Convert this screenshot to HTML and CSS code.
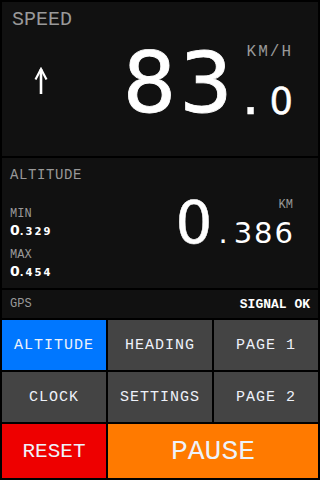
FILE: index.html
```html
<!DOCTYPE html>
<html lang="en">
<head>
    <meta charset="UTF-8">
    <title>Trip Computer</title>
    <link rel="stylesheet" href="styles.css">
</head>
<body>
    <div class="screen">
        <section class="panel speed">
            <div class="label">SPEED</div>
            <div class="speed-row">
                <svg class="heading" width="14" height="28" viewBox="0 0 14 28">
                    <path d="M7 2 V27" stroke="#fff" stroke-width="2.6" fill="none"/>
                    <path d="M1.5 12.5 L7 2 L12.5 12.5" stroke="#fff" stroke-width="2.2" fill="none" stroke-linejoin="miter"/>
                </svg>
                <div class="speed-value">
                    <span class="int">83</span>
                    <div class="side">
                        <span class="unit">KM/H</span>
                        <span class="frac"><span class="dot">.</span>0</span>
                    </div>
                </div>
            </div>
        </section>

        <section class="panel altitude">
            <div class="label small">ALTITUDE</div>
            <div class="alt-row">
                <div class="stats">
                    <div class="stat-label">MIN</div>
                    <div class="stat-value">0<span>.329</span></div>
                    <div class="stat-label">MAX</div>
                    <div class="stat-value">0<span>.454</span></div>
                </div>
                <div class="alt-value">
                    <span class="int">0</span>
                    <div class="side">
                        <span class="unit">KM</span>
                        <span class="frac"><span class="dot">.</span>386</span>
                    </div>
                </div>
            </div>
        </section>

        <section class="panel gps">
            <span class="gps-label">GPS</span>
            <span class="gps-state">SIGNAL OK</span>
        </section>

        <div class="buttons">
            <button class="btn active">ALTITUDE</button>
            <button class="btn">HEADING</button>
            <button class="btn">PAGE 1</button>
            <button class="btn">CLOCK</button>
            <button class="btn">SETTINGS</button>
            <button class="btn">PAGE 2</button>
            <button class="btn reset">RESET</button>
            <button class="btn pause">PAUSE</button>
        </div>
    </div>
</body>
</html>
```

FILE: styles.css
```css
body {
    margin: 0;
    background: #000;
    font-family: "Liberation Mono", monospace;
    color: #fff;
}
.screen {
    display: flex;
    flex-direction: column;
    gap: 2px;
    padding: 2px;
    height: 480px;
    box-sizing: border-box;
}
.panel {
    background: #111;
}
.label {
    color: #999;
    font-size: 20px;
    line-height: 1;
}
.label.small {
    font-size: 14px;
    letter-spacing: 0.6px;
}
.speed {
    height: 154px;
    padding: 8px 25px 0 10px;
    box-sizing: border-box;
}
.speed-row {
    display: flex;
    justify-content: space-between;
    align-items: flex-start;
    margin-top: 12px;
}
.heading {
    margin-left: 22px;
    margin-top: 25px;
}
.speed-value, .alt-value {
    display: flex;
    font-family: "DejaVu Sans", sans-serif;
}
.speed-value .int {
    font-size: 84px;
    line-height: 82px;
    letter-spacing: 3px;
    -webkit-text-stroke: 0.8px #fff;
}
.side {
    display: flex;
    flex-direction: column;
    justify-content: space-between;
    align-items: flex-end;
}
.unit {
    font-family: "Liberation Mono", monospace;
    color: #999;
    font-size: 16px;
    letter-spacing: 2px;
    line-height: 1;
}
.speed .unit {
    margin-top: 2px;
}
.speed-value .frac {
    font-size: 37px;
    line-height: 37px;
    margin-bottom: 4px;
    -webkit-text-stroke: 0.4px #fff;
}
.speed-value .dot {
    display: inline-block;
    font-size: 56px;
    line-height: 37px;
    margin: 0 10px 0 6px;
}
.altitude {
    height: 130px;
    padding: 10px 25px 0 8px;
    box-sizing: border-box;
}
.alt-row {
    display: flex;
    justify-content: space-between;
    align-items: flex-start;
    margin-top: 11px;
}
.stats {
    padding-top: 15px;
}
.stat-label {
    color: #999;
    font-size: 12px;
    line-height: 13px;
}
.stat-value {
    font-family: "DejaVu Sans", sans-serif;
    font-weight: bold;
    font-size: 14px;
    line-height: 18px;
    margin-bottom: 8px;
}
.stat-value span {
    font-size: 10px;
    letter-spacing: 2px;
}
.alt-value .int {
    font-size: 58px;
    line-height: 60px;
    margin-right: 6px;
    -webkit-text-stroke: 0.5px #fff;
}
.alt-value .unit {
    font-size: 12px;
    letter-spacing: 0;
    margin-top: 6px;
}
.alt-value .frac {
    font-size: 29px;
    line-height: 29px;
    letter-spacing: 2px;
    margin-right: -2px;
    margin-bottom: 5px;
}
.alt-value .dot {
    margin-right: 4px;
}
.gps {
    height: 28px;
    display: flex;
    justify-content: space-between;
    align-items: center;
    padding: 0 8px 0 8px;
}
.gps-label {
    color: #999;
    font-size: 12px;
}
.gps-state {
    font-size: 13px;
    font-weight: bold;
}
.buttons {
    display: grid;
    grid-template-columns: repeat(3, 1fr);
    grid-template-rows: 50px 50px 54px;
    gap: 2px;
}
.btn {
    border: none;
    margin: 0;
    padding: 0;
    background: #444;
    color: #eef2fa;
    font-family: "Liberation Mono", monospace;
    font-size: 15px;
    letter-spacing: 1px;
}
.btn.active {
    background: #0077ff;
}
.btn.reset {
    background: #e00;
    font-size: 21px;
    letter-spacing: 0;
}
.btn.pause {
    grid-column: span 2;
    background: #ff7a00;
    font-size: 28px;
    letter-spacing: 0;
}
```
